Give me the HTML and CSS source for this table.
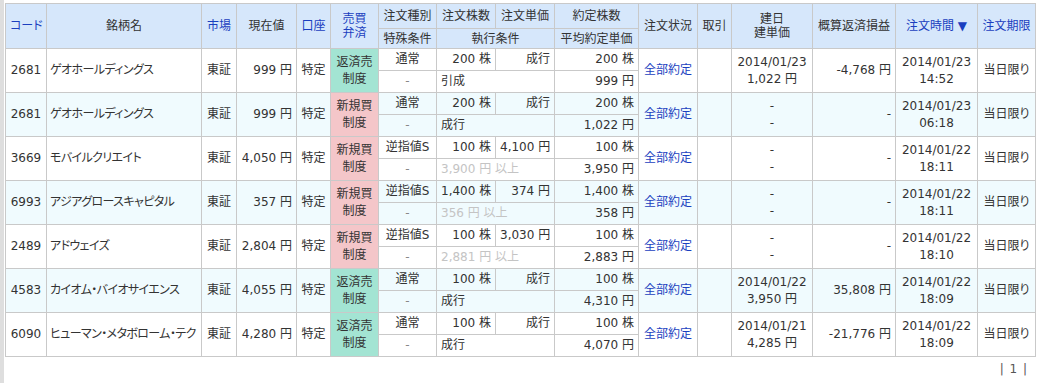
FILE: index.html
```html
<!DOCTYPE html>
<html lang="ja">
<head>
<meta charset="utf-8">
<link rel="stylesheet" href="styles.css">
</head>
<body>
<div class="page">
<table class="orders">
<colgroup>
<col class="c1"><col class="c2"><col class="c3"><col class="c4"><col class="c5"><col class="c6"><col class="c7"><col class="c8"><col class="c9"><col class="c10"><col class="c11"><col class="c12"><col class="c13"><col class="c14"><col class="c15"><col class="c16">
</colgroup>
<thead>
<tr class="h1">
<th rowspan="2" class="link">コード</th>
<th rowspan="2">銘柄名</th>
<th rowspan="2" class="link">市場</th>
<th rowspan="2">現在値</th>
<th rowspan="2" class="link">口座</th>
<th rowspan="2" class="link two">売買<br>弁済</th>
<th>注文種別</th>
<th>注文株数</th>
<th>注文単価</th>
<th>約定株数</th>
<th rowspan="2">注文状況</th>
<th rowspan="2">取引</th>
<th rowspan="2" class="two">建日<br>建単価</th>
<th rowspan="2">概算返済損益</th>
<th rowspan="2" class="link">注文時間 ▼</th>
<th rowspan="2" class="link">注文期限</th>
</tr>
<tr class="h2">
<th>特殊条件</th>
<th colspan="2">執行条件</th>
<th>平均約定単価</th>
</tr>
</thead>
<tbody>
<tr class="top">
<td rowspan="2" class="ctr">2681</td>
<td rowspan="2" class="name">ゲオホールディングス</td>
<td rowspan="2" class="ctr">東証</td>
<td rowspan="2" class="num">999 円</td>
<td rowspan="2" class="ctr">特定</td>
<td rowspan="2" class="kind sell">返済売<br>制度</td>
<td class="ctr">通常</td>
<td class="num">200 株</td>
<td class="num">成行</td>
<td class="num">200 株</td>
<td rowspan="2" class="status">全部約定</td>
<td rowspan="2"></td>
<td rowspan="2" class="ctr two">2014/01/23<br>1,022 円</td>
<td rowspan="2" class="num">-4,768 円</td>
<td rowspan="2" class="ctr two">2014/01/23<br>14:52</td>
<td rowspan="2" class="ctr">当日限り</td>
</tr>
<tr class="bot">
<td class="ctr dash">-</td>
<td colspan="2" class="cond">引成</td>
<td class="num">999 円</td>
</tr>

<tr class="top alt">
<td rowspan="2" class="ctr">2681</td>
<td rowspan="2" class="name">ゲオホールディングス</td>
<td rowspan="2" class="ctr">東証</td>
<td rowspan="2" class="num">999 円</td>
<td rowspan="2" class="ctr">特定</td>
<td rowspan="2" class="kind buy">新規買<br>制度</td>
<td class="ctr">通常</td>
<td class="num">200 株</td>
<td class="num">成行</td>
<td class="num">200 株</td>
<td rowspan="2" class="status">全部約定</td>
<td rowspan="2"></td>
<td rowspan="2" class="ctr two">-<br>-</td>
<td rowspan="2" class="num">-</td>
<td rowspan="2" class="ctr two">2014/01/23<br>06:18</td>
<td rowspan="2" class="ctr">当日限り</td>
</tr>
<tr class="bot alt">
<td class="ctr dash">-</td>
<td colspan="2" class="cond">成行</td>
<td class="num">1,022 円</td>
</tr>

<tr class="top">
<td rowspan="2" class="ctr">3669</td>
<td rowspan="2" class="name">モバイルクリエイト</td>
<td rowspan="2" class="ctr">東証</td>
<td rowspan="2" class="num">4,050 円</td>
<td rowspan="2" class="ctr">特定</td>
<td rowspan="2" class="kind buy">新規買<br>制度</td>
<td class="ctr">逆指値S</td>
<td class="num">100 株</td>
<td class="num">4,100 円</td>
<td class="num">100 株</td>
<td rowspan="2" class="status">全部約定</td>
<td rowspan="2"></td>
<td rowspan="2" class="ctr two">-<br>-</td>
<td rowspan="2" class="num">-</td>
<td rowspan="2" class="ctr two">2014/01/22<br>18:11</td>
<td rowspan="2" class="ctr">当日限り</td>
</tr>
<tr class="bot">
<td class="ctr dash">-</td>
<td colspan="2" class="cond muted">3,900 円 以上</td>
<td class="num">3,950 円</td>
</tr>

<tr class="top alt">
<td rowspan="2" class="ctr">6993</td>
<td rowspan="2" class="name">アジアグロースキャピタル</td>
<td rowspan="2" class="ctr">東証</td>
<td rowspan="2" class="num">357 円</td>
<td rowspan="2" class="ctr">特定</td>
<td rowspan="2" class="kind buy">新規買<br>制度</td>
<td class="ctr">逆指値S</td>
<td class="num">1,400 株</td>
<td class="num">374 円</td>
<td class="num">1,400 株</td>
<td rowspan="2" class="status">全部約定</td>
<td rowspan="2"></td>
<td rowspan="2" class="ctr two">-<br>-</td>
<td rowspan="2" class="num">-</td>
<td rowspan="2" class="ctr two">2014/01/22<br>18:11</td>
<td rowspan="2" class="ctr">当日限り</td>
</tr>
<tr class="bot alt">
<td class="ctr dash">-</td>
<td colspan="2" class="cond muted">356 円 以上</td>
<td class="num">358 円</td>
</tr>

<tr class="top">
<td rowspan="2" class="ctr">2489</td>
<td rowspan="2" class="name">アドウェイズ</td>
<td rowspan="2" class="ctr">東証</td>
<td rowspan="2" class="num">2,804 円</td>
<td rowspan="2" class="ctr">特定</td>
<td rowspan="2" class="kind buy">新規買<br>制度</td>
<td class="ctr">逆指値S</td>
<td class="num">100 株</td>
<td class="num">3,030 円</td>
<td class="num">100 株</td>
<td rowspan="2" class="status">全部約定</td>
<td rowspan="2"></td>
<td rowspan="2" class="ctr two">-<br>-</td>
<td rowspan="2" class="num">-</td>
<td rowspan="2" class="ctr two">2014/01/22<br>18:10</td>
<td rowspan="2" class="ctr">当日限り</td>
</tr>
<tr class="bot">
<td class="ctr dash">-</td>
<td colspan="2" class="cond muted">2,881 円 以上</td>
<td class="num">2,883 円</td>
</tr>

<tr class="top alt">
<td rowspan="2" class="ctr">4583</td>
<td rowspan="2" class="name">カイオム・バイオサイエンス</td>
<td rowspan="2" class="ctr">東証</td>
<td rowspan="2" class="num">4,055 円</td>
<td rowspan="2" class="ctr">特定</td>
<td rowspan="2" class="kind sell">返済売<br>制度</td>
<td class="ctr">通常</td>
<td class="num">100 株</td>
<td class="num">成行</td>
<td class="num">100 株</td>
<td rowspan="2" class="status">全部約定</td>
<td rowspan="2"></td>
<td rowspan="2" class="ctr two">2014/01/22<br>3,950 円</td>
<td rowspan="2" class="num">35,808 円</td>
<td rowspan="2" class="ctr two">2014/01/22<br>18:09</td>
<td rowspan="2" class="ctr">当日限り</td>
</tr>
<tr class="bot alt">
<td class="ctr dash">-</td>
<td colspan="2" class="cond">成行</td>
<td class="num">4,310 円</td>
</tr>

<tr class="top">
<td rowspan="2" class="ctr">6090</td>
<td rowspan="2" class="name">ヒューマン・メタボローム・テク</td>
<td rowspan="2" class="ctr">東証</td>
<td rowspan="2" class="num">4,280 円</td>
<td rowspan="2" class="ctr">特定</td>
<td rowspan="2" class="kind sell">返済売<br>制度</td>
<td class="ctr">通常</td>
<td class="num">100 株</td>
<td class="num">成行</td>
<td class="num">100 株</td>
<td rowspan="2" class="status">全部約定</td>
<td rowspan="2"></td>
<td rowspan="2" class="ctr two">2014/01/21<br>4,285 円</td>
<td rowspan="2" class="num">-21,776 円</td>
<td rowspan="2" class="ctr two">2014/01/22<br>18:09</td>
<td rowspan="2" class="ctr">当日限り</td>
</tr>
<tr class="bot">
<td class="ctr dash">-</td>
<td colspan="2" class="cond">成行</td>
<td class="num">4,070 円</td>
</tr>
</tbody>
</table>
<div class="pager">| 1 |</div>
</div>
</body>
</html>
```
FILE: styles.css
```css
html, body {
  margin: 0;
  padding: 0;
  background: #ffffff;
}
body {
  font-family: "DejaVu Sans", "Noto Sans CJK JP", sans-serif;
  font-size: 12px;
  color: #333333;
}
.page {
  border-left: 4px solid #dedede;
  padding: 3px 0 0 1px;
  min-height: 383px;
  box-sizing: border-box;
  width: 1043px;
}
.orders {
  border-collapse: collapse;
  table-layout: fixed;
  width: 1030px;
  font-feature-settings: "palt";
}
.c1 { width: 41px; }
.c2 { width: 155px; }
.c3 { width: 35px; }
.c4 { width: 60px; }
.c5 { width: 34px; }
.c6 { width: 48px; }
.c7 { width: 58px; }
.c8 { width: 59px; }
.c9 { width: 59px; }
.c10 { width: 84px; }
.c11 { width: 59px; }
.c12 { width: 34px; }
.c13 { width: 81px; }
.c14 { width: 83px; }
.c15 { width: 82px; }
.c16 { width: 58px; }

.orders th, .orders td {
  border: 1px solid #c9c9c9;
  padding: 0 4px;
  white-space: nowrap;
  overflow: hidden;
}
.orders th {
  background: #d6e7fb;
  font-weight: normal;
  color: #333333;
  text-align: center;
  line-height: 14px;
}
.orders th.link { color: #1b3fbf; }
.h1 { height: 25px; }
.h2 { height: 20px; }
.orders td {
  line-height: 17px;
  height: 21px;
}
tr.alt td { background: #f0fbfe; }
.ctr { text-align: center; }
.num { text-align: right; }
.orders td.name {
  text-align: left;
  padding-left: 3px;
  padding-right: 0;
  letter-spacing: -0.6px;
}
.cond { text-align: left; }
.muted { color: #c4c4c4; }
.dash { color: #888888; }
.status { text-align: center; color: #1b3fbf; }
.orders td.kind { text-align: center; }
.orders td.sell { background: #a3e4d3; }
.orders td.buy { background: #f4c6c9; }
.pager {
  width: 1030px;
  box-sizing: border-box;
  text-align: right;
  padding: 5px 7px 0 0;
  color: #555555;
  letter-spacing: 1px;
}
```
